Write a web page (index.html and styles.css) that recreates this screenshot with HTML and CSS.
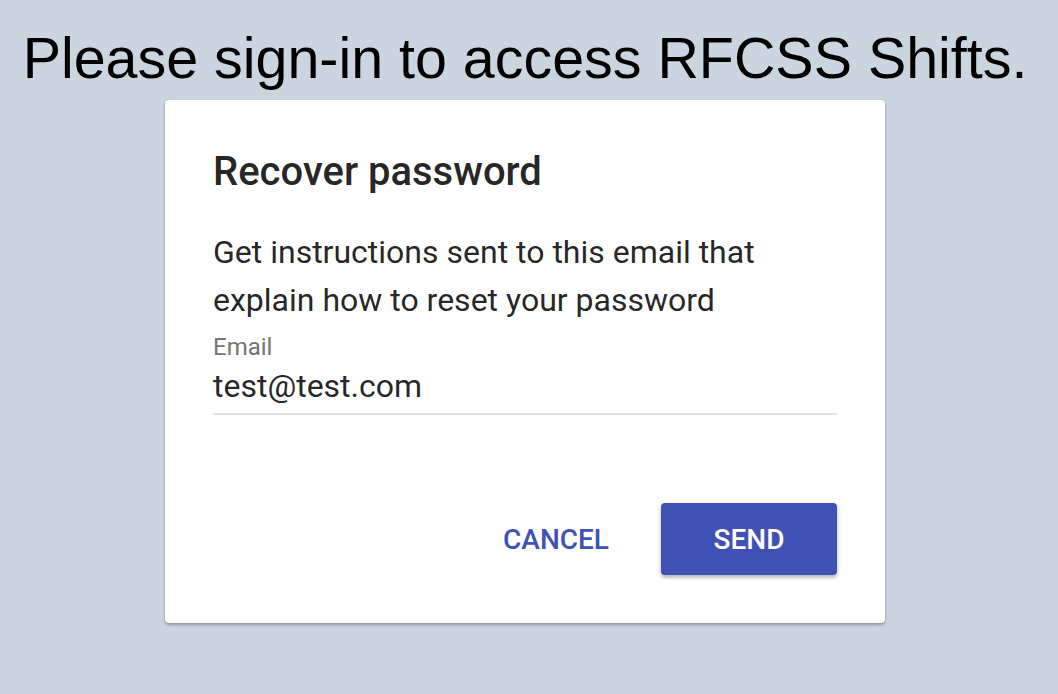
FILE: index.html
```html
<!DOCTYPE html>
<html>
<head>
<meta charset="utf-8">
<link rel="stylesheet" href="styles.css">
</head>
<body>
<div class="page">
  <h1 class="headline">Please sign-in to access RFCSS Shifts.</h1>
  <div class="card">
    <h2 class="card-title">Recover password</h2>
    <p class="card-text">Get instructions sent to this email that explain how to reset your password</p>
    <div class="field">
      <label class="field-label">Email</label>
      <div class="field-input">test@test.com</div>
    </div>
    <div class="actions">
      <button class="btn btn-text">CANCEL</button>
      <button class="btn btn-raised">SEND</button>
    </div>
  </div>
</div>
</body>
</html>
```
FILE: styles.css
```css
html, body {
  margin: 0;
  padding: 0;
  background: #cbd5e0;
  height: 100%;
}
.page {
  display: flex;
  flex-direction: column;
  align-items: center;
  padding: 26px 8px 0 0;
}
.headline {
  margin: 0 0 10px;
  font-family: "Liberation Sans", Arial, sans-serif;
  font-weight: 400;
  font-size: 57.4px;
  line-height: 64px;
  color: #000;
  white-space: nowrap;
}
.card {
  box-sizing: border-box;
  width: 720px;
  background: #fff;
  border-radius: 4px;
  box-shadow: 0 2px 3px rgba(0,0,0,0.28), 0 0 2px rgba(0,0,0,0.1);
  padding: 48px 48px 48px;
  font-family: Roboto, "Noto Sans", sans-serif;
  color: rgba(0,0,0,0.87);
}
.card-title {
  margin: 0;
  font-size: 40px;
  line-height: 48px;
  font-weight: 500;
}
.card-text {
  margin: 32px 0 0;
  font-size: 32px;
  line-height: 48px;
  width: 560px;
}
.field {
  margin-top: 11px;
  display: flex;
  flex-direction: column;
  border-bottom: 2px solid #e0e0e0;
  padding-bottom: 9px;
}
.field-label {
  font-size: 24px;
  line-height: 24px;
  color: #757575;
}
.field-input {
  margin-top: 9px;
  font-size: 32px;
  line-height: 36px;
}
.actions {
  margin-top: 88px;
  display: flex;
  justify-content: flex-end;
  gap: 20px;
}
.btn {
  font-family: Roboto, "Noto Sans", sans-serif;
  font-size: 28px;
  font-weight: 500;
  height: 72px;
  min-width: 176px;
  padding: 0 32px;
  border: none;
  border-radius: 4px;
  background: transparent;
  cursor: pointer;
}
.btn-text {
  color: #3f51b5;
  min-width: 0;
}
.btn-raised {
  background: #3f51b5;
  color: #fff;
  box-shadow: 0 3px 3px rgba(0,0,0,0.2), 0 1px 6px rgba(0,0,0,0.12);
}
```
